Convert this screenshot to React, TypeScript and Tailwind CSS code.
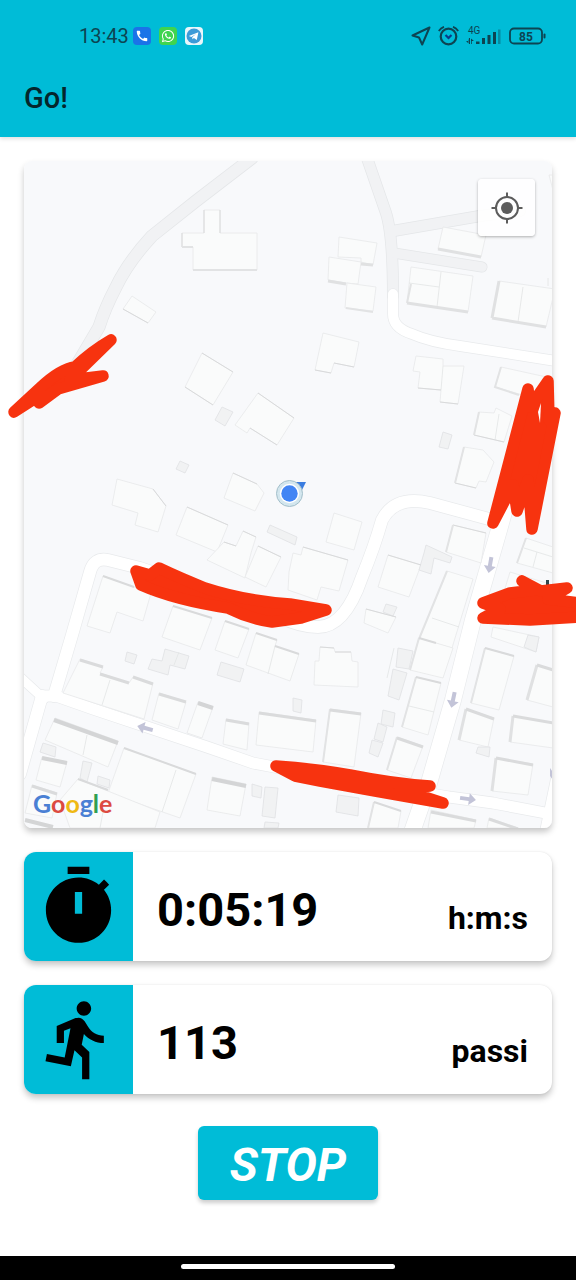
import type { ReactNode } from "react";
import { FaWhatsapp } from "react-icons/fa";
import { MdCall, MdDirectionsRun } from "react-icons/md";

/* ---------- map data, in map units ---------- */

const BUILDINGS = [
  "182,233 204,233 204,210 220,210 220,233 257,233 257,270 193,270 193,247 182,247",
  "132,296 156,312 148,323 123,309",
  "202,353 233,372 213,405 185,387",
  "258,393 294,418 277,445 250,428 247,433 235,425",
  "339,237 377,243 373,265 361,262 361,258 338,257",
  "329,257 361,262 358,284 346,283 328,280",
  "347,283 376,287 373,311 345,308",
  "443,227 486,235 481,257 438,249",
  "411,267 473,276 468,312 407,303",
  "499,281 555,289 546,327 492,318",
  "323,333 359,342 354,367 334,363 331,373 315,370",
  "416,356 443,359 443,366 464,366 458,404 440,402 441,390 418,388 420,372 413,371",
  "501,367 551,378 546,400 519,394 495,387",
  "117,479 153,489 166,506 158,532 135,525 138,513 112,505",
  "233,473 257,484 264,493 255,511 224,498",
  "187,507 228,525 217,552 176,535",
  "243,531 256,537 251,553 245,578 207,560 224,542 236,546",
  "258,546 281,557 266,587 245,577",
  "334,513 362,522 354,550 326,542",
  "303,547 348,560 339,591 321,587 317,600 288,590 289,572 293,553 301,555",
  "388,555 421,565 409,597 378,587",
  "453,525 486,533 481,563 446,552",
  "447,571 473,579 452,648 419,639",
  "419,638 453,648 443,678 410,670",
  "366,609 396,617 388,633 364,623",
  "464,447 483,450 494,462 486,482 479,481 476,488 455,483",
  "479,412 494,413 496,408 506,413 512,416 504,442 474,435",
  "526,538 553,547 553,573 517,563",
  "510,572 553,585 553,610 503,595",
  "103,576 151,593 143,621 117,612 110,633 87,626",
  "173,606 212,618 200,650 162,637",
  "225,621 249,629 238,658 215,650",
  "256,633 277,640 275,646 299,654 290,681 246,665",
  "80,659 103,667 100,673 129,683 133,677 153,683 144,719 63,693",
  "159,693 186,702 178,729 152,720",
  "198,702 213,707 202,738 187,733",
  "226,719 249,723 247,750 223,744",
  "259,712 316,720 313,752 256,745",
  "55,718 118,741 108,767 45,740",
  "124,748 196,774 180,818 108,793",
  "78,779 160,812 155,828 70,828 60,800",
  "42,757 67,762 60,787 36,780",
  "32,785 57,793 52,818 25,813",
  "212,777 246,784 240,816 207,810",
  "320,647 334,648 335,652 351,652 352,661 358,662 358,687 314,685 315,661 319,661",
  "330,709 361,713 354,767 323,762",
  "416,677 441,683 428,735 402,727",
  "397,737 423,746 411,778 387,770",
  "485,648 514,656 499,710 471,703",
  "493,627 539,637 536,652 491,637",
  "537,665 553,670 553,707 527,700",
  "466,709 494,718 488,747 459,740",
  "513,716 553,723 553,748 510,742",
  "496,758 533,764 528,795 492,791",
  "374,802 401,811 398,828 368,828",
  "431,810 476,820 474,828 428,828",
  "489,818 518,828 487,828",
  "549,175 553,175 553,190",
];

const SHEDS = [
  "222,407 233,412 225,426 215,420",
  "180,461 189,465 185,473 176,469",
  "270,525 297,537 295,545 267,532",
  "426,545 452,557 450,563 434,558 431,574 419,570 424,553",
  "386,604 397,607 393,616 383,612",
  "443,432 452,435 448,449 439,447",
  "127,652 137,655 134,664 125,661",
  "165,649 189,656 185,669 170,665 168,675 148,669 152,659 162,661",
  "221,662 244,669 240,682 217,675",
  "43,743 56,747 55,757 40,752",
  "83,761 92,763 87,782 80,778",
  "98,776 110,780 109,788 97,784",
  "252,784 262,787 261,798 252,796",
  "265,787 278,788 275,818 262,816",
  "265,822 279,823 278,828 264,828",
  "293,698 302,700 301,713 293,711",
  "398,648 413,651 409,669 396,667",
  "393,669 407,673 399,700 388,696",
  "383,710 395,713 393,727 381,724",
  "378,723 387,727 383,742 374,739",
  "372,740 383,743 378,757 369,753",
  "528,635 539,637 536,652 524,647",
  "478,747 490,747 489,757 476,753",
  "338,795 359,798 358,816 336,812",
];

const DIVIDERS =
  "M441 272L437 307M409 283L439 287M523 287L518 322M443 366L441 390M499 414L495 440M524 548L553 557M537 552L533 567M432 618L459 627M409 706L434 712M110 680L102 705M87 735L83 755M176 770L162 812M275 646L268 674M103 812L100 828M174 665L179 652M548 278L548 286M394 648L387 678";

const WALLS: { width: number; color: string; d: string }[] = [
  {
    width: 1,
    color: "#d9dadb",
    d: "M123 309L148 323M202 353L233 372M185 387L213 405M258 393L294 418M250 428L277 445M153 489L166 506M187 507L228 525M258 546L281 557M243 531L256 537M224 542L236 546M303 547L348 560M388 555L421 565M315 370L331 373M334 363L354 367M182 247V233M204 233V210M220 233V210M320 647L334 648M335 652L351 652M453 525L486 533M366 609L396 617M233 473L257 484M418 388L441 390M440 402L458 404M474 435L504 442M455 483L476 488",
  },
  {
    width: 2,
    color: "#e2e3e4",
    d: "M193 270H257M182 247H193M346 308L373 312M447 571L419 639M419 638L410 670M416 677L402 727M485 648L471 703M501 367L495 387L519 395M464 447L455 483M453 525L446 552M479 412L474 435M397 737L387 770M330 709L323 762M374 802L368 828M411 284L407 303M526 538L517 563",
  },
  {
    width: 2,
    color: "#d9dadb",
    d: "M103 576L134 587M173 606L212 618M225 621L249 629M256 633L277 640M275 646L299 654M124 748L196 774M78 779L108 790M416 677L441 683M419 638L436 643M485 648L514 656M374 802L401 811",
  },
  {
    width: 3,
    color: "#e0e1e2",
    d: "M438 249L481 257M407 303L468 312M492 318L546 327M499 281L492 318M328 281L346 284M361 264L373 265M466 709L459 740M513 716L510 742M496 758L492 791M537 665L527 700",
  },
  {
    width: 3,
    color: "#dadbdc",
    d: "M80 660L103 667M100 674L129 683M133 677L153 684M159 694L186 702M226 720L249 724M259 713L316 721M330 710L361 714M397 738L423 747M466 709L494 719M513 716L553 723M496 758L533 765M537 665L553 670M431 812L476 821M489 819L518 829M32 786L57 794",
  },
  {
    width: 4,
    color: "#d4d5d6",
    d: "M54 720L118 743M42 758L67 763M198 703L213 708M212 779L246 786M25 820L53 827",
  },
];

const GREY_ROADS = [
  { width: 13, d: "M252 158L196 201L152 236Q128 262 116 287Q105 308 99 327L76 366" },
  { width: 12, d: "M367 158L386 213Q393 235 393 296" },
  { width: 12, d: "M393 231L480 216L520 211" },
  { width: 11, d: "M394 253L482 267" },
];

const WHITE_ROADS = [
  { width: 10, d: "M393 294V314Q393 328 412 334Q430 342 460 346L556 361" },
  {
    width: 12,
    d: "M500 522L430 503Q395 495 382 520Q374 548 362 577Q345 627 318 627Q300 627 280 617L140 568L108 560Q94 557 90 572L72 635L54 696",
  },
  { width: 11, d: "M42 696H56L93 709L207 747L253 763L290 770L449 797L493 803L556 815" },
  { width: 9, d: "M44 699L20 677" },
  { width: 12, d: "M42 696L20 774" },
  { width: 16, d: "M535 400L499 530L473 620L453 700L429 783L412 832" },
  { width: 14, d: "M562 760L547 832" },
];

const SCRIBBLES = [
  "M111 340Q92 351 75 367Q60 369 40 388L14 412L39 396L39 403L58 389L103 376L70 380Z",
  "M136 571L150 575L159 568Q180 578 205 588Q245 601 290 604L326 610L301 618L272 622Q250 619 228 608Q175 600 141 585Z",
  "M493 523L528 389L530 407L548 381L549 420L555 413L532 529L528 480L517 511L513 485Z",
  "M483 603L510 593L535 590L522 581L541 591L567 588L548 599L580 603V617L530 620L483 618L500 609Z",
  "M276 766Q310 768 350 775Q395 784 430 786L400 789L443 803L375 791L320 781L295 776Z",
];

const ARROW = "M-2 -8H2V1H6L0 8L-6 1H-2Z";

function MapDrawing() {
  return (
    <svg viewBox="24 161 528 667" className="block h-auto w-full rounded-lg" role="img" aria-label="Mappa">
      <rect x="24" y="161" width="528" height="667" fill="#f8f9fb" />
      <g fill="none" strokeLinecap="round" strokeLinejoin="round">
        {GREY_ROADS.map((r) => (
          <path key={r.d} d={r.d} stroke="#e4e6e8" strokeWidth={r.width} />
        ))}
        {GREY_ROADS.map((r) => (
          <path key={r.d} d={r.d} stroke="#f1f2f4" strokeWidth={r.width - 1.4} />
        ))}
        {WHITE_ROADS.map((r) => (
          <path key={r.d} d={r.d} stroke="#e8eaec" strokeWidth={r.width + 1.4} />
        ))}
        {WHITE_ROADS.map((r) => (
          <path key={r.d} d={r.d} stroke="#ffffff" strokeWidth={r.width} />
        ))}
      </g>
      <g fill="#fafbfb" stroke="#e7e9ea" strokeWidth="0.8">
        {BUILDINGS.map((p) => (
          <polygon key={p} points={p} />
        ))}
      </g>
      <g fill="#f1f2f3" stroke="#dfe1e3" strokeWidth="0.8">
        {SHEDS.map((p) => (
          <polygon key={p} points={p} />
        ))}
      </g>
      <path d={DIVIDERS} fill="none" stroke="#e2e4e5" strokeWidth="0.8" />
      {WALLS.map((w) => (
        <path key={w.d} d={w.d} fill="none" stroke={w.color} strokeWidth={w.width} />
      ))}
      <g fill="#c3c4d8">
        <path d={ARROW} transform="translate(490 565) rotate(10)" />
        <path d={ARROW} transform="translate(453 700) rotate(12)" />
        <path d={ARROW} transform="translate(145 728) rotate(105)" />
        <path d={ARROW} transform="translate(468 799) rotate(-82)" />
        <path d="M550 768L553 772V780L550 776Z" />
      </g>
      <polygon points="293,482 306,482 300,494" fill="#3b7de0" />
      <circle cx="289.500" cy="493.500" r="13" fill="#d3e6ee" stroke="#a3bfca" strokeWidth="1" />
      <circle cx="289.500" cy="493.500" r="9.700" fill="#ffffff" />
      <circle cx="289.500" cy="493.500" r="8.200" fill="#4285f4" />
    </svg>
  );
}

function Scribbles() {
  return (
    <svg
      viewBox="24 161 528 667"
      className="pointer-events-none absolute inset-0 h-full w-full overflow-visible"
      aria-hidden="true"
    >
      <path d="M546 580h3v6h-3z" fill="#30474e" />
      <g fill="#f7330f" stroke="#f7330f" strokeWidth="11.500" strokeLinecap="round" strokeLinejoin="round">
        {SCRIBBLES.map((d) => (
          <path key={d} d={d} />
        ))}
      </g>
      <path d="M538 412L541 403L540 423Z" fill="#ffffff" />
    </svg>
  );
}

function LocateIcon() {
  return (
    <svg viewBox="0 0 32 32" className="size-8" fill="none" stroke="currentColor" aria-hidden="true">
      <circle cx="16" cy="16" r="11" strokeWidth="2" />
      <path d="M16 0.500V5M16 27V31.500M0.500 16H5M27 16H31.500" strokeWidth="2" />
      <circle cx="16" cy="16" r="6" fill="currentColor" stroke="none" />
    </svg>
  );
}

function TimerIcon() {
  return (
    <svg viewBox="0 0 24 24" className="size-[87px]" fill="currentColor" fillRule="evenodd" aria-hidden="true">
      <path d="M15 1H9v2h6V1zm-4 13h2V8h-2v6zm8.030-6.610l1.420-1.420c-.43-.51-.9-.99-1.410-1.410l-1.420 1.420C16.070 4.740 14.120 4 12 4c-4.970 0-9 4.030-9 9s4.020 9 9 9 9-4.030 9-9c0-2.120-.74-4.070-1.970-5.610z" />
    </svg>
  );
}

function StatusBar() {
  return (
    <div className="flex h-[72px] items-center justify-between pr-[30px] pl-[79px] text-[#0d4452]">
      <div className="flex items-center gap-2">
        <span className="-mr-1 text-[20px] leading-6">13:43</span>
        <span className="flex size-[18px] items-center justify-center rounded bg-[#1a73e8] text-white">
          <MdCall className="size-[14px]" />
        </span>
        <span className="flex size-[18px] items-center justify-center rounded bg-[#3fd44f] text-white">
          <FaWhatsapp className="size-[14px]" />
        </span>
        <span className="flex size-[18px] items-center justify-center rounded bg-[#e9f6fb]">
          <svg viewBox="0 0 16 16" className="size-4" aria-hidden="true">
            <circle cx="8" cy="8" r="7.500" fill="#3d9bd8" />
            <path d="M2.800 8.100L12.400 4.200L10.800 12L7.900 9.900L6.500 11.300L6.200 9.200L10 6.100L5.300 8.900Z" fill="#ffffff" />
          </svg>
        </span>
      </div>
      <div className="flex items-center gap-[7px]">
        <svg viewBox="0 0 20 20" className="size-5" fill="none" stroke="currentColor" strokeWidth="2" strokeLinejoin="round" aria-hidden="true">
          <path d="M18.500 1.500L1.500 9.500L8 11.500L11.200 18.500Z" />
        </svg>
        <svg viewBox="0 0 21 20" className="h-5 w-[21px]" fill="none" stroke="currentColor" strokeWidth="2.200" aria-hidden="true">
          <circle cx="10.500" cy="10.500" r="7.800" />
          <path d="M7.500 9L10.500 12L13.500 9" stroke="#0b3a86" />
          <path d="M0.800 5Q2.800 1.800 6 0.800M20.200 5Q18.200 1.800 15 0.800" strokeWidth="1.800" />
        </svg>
        <svg viewBox="0 0 36 20" className="h-5 w-9" fill="currentColor" aria-label="4G" role="img">
          <text x="2" y="8" fontSize="10" fontFamily="Roboto, sans-serif">
            4G
          </text>
          <path d="M2.500 12V17.500L0 15H2ZM5 18V12.500L8 15H5.800V18ZM3 12h1v6h-1z" />
          <path d="M10 15.500h3.500v2.500h-3.500zM16 12h3v6h-3zM21.500 9h3v9h-3zM27 6h3v12h-3z" />
          <path d="M32 3.500h2.500v14.500h-2.500z" opacity="0.4" />
        </svg>
        <svg viewBox="0 0 37 18" className="h-[18px] w-[37px]" aria-label="85" role="img">
          <rect x="1" y="1.500" width="32" height="15" rx="4" fill="none" stroke="currentColor" strokeWidth="1.800" />
          <rect x="34.500" y="6.500" width="2" height="5" rx="1" fill="currentColor" />
          <text x="17" y="13.500" textAnchor="middle" fontSize="12" fontWeight="700" fontFamily="Roboto, sans-serif" fill="currentColor">
            85
          </text>
        </svg>
      </div>
    </div>
  );
}

function StatCard({ icon, value, unit }: { icon: ReactNode; value: string; unit: string }) {
  return (
    <section className="flex h-[109px] items-stretch overflow-hidden rounded-xl bg-white shadow-[0_4px_6px_rgba(0,0,0,0.22),0_0_2px_rgba(0,0,0,0.1)]">
      <div className="flex w-[109px] items-center justify-center bg-[#00bcd7] text-black">{icon}</div>
      <div className="flex flex-1 items-center justify-between px-6 font-bold text-black">
        <span className="pt-1.5 text-[47px] leading-[56px]">{value}</span>
        <span className="pt-[22px] text-[32px] leading-9">{unit}</span>
      </div>
    </section>
  );
}

export default function App() {
  return (
    <div className="flex min-h-screen flex-col overflow-x-hidden bg-white font-[Roboto,sans-serif]">
      <header className="flex h-[137px] flex-col bg-[#00bcd7] shadow-[0_2px_4px_rgba(0,0,0,0.12)]">
        <StatusBar />
        <h1 className="px-6 pt-2 text-[29px] leading-9 font-medium text-[#04262c]">Go!</h1>
      </header>

      <main className="flex flex-1 flex-col gap-6 px-6 pt-6">
        <div className="relative rounded-lg shadow-[0_4px_6px_rgba(0,0,0,0.22)]">
          <MapDrawing />
          <button
            type="button"
            aria-label="La mia posizione"
            className="absolute top-[18px] right-[17px] flex size-[57px] items-center justify-center rounded-sm bg-white/90 text-[#5c5c5c] shadow-[0_1px_3px_rgba(0,0,0,0.3)]"
          >
            <LocateIcon />
          </button>
          <div className="absolute bottom-[9px] left-[9px] font-[Lato,sans-serif] text-[25px] leading-8 font-bold">
            <span className="text-[#4a80d4]">G</span>
            <span className="text-[#dc4a41]">o</span>
            <span className="text-[#efb913]">o</span>
            <span className="text-[#4a80d4]">g</span>
            <span className="text-[#2f9f52]">l</span>
            <span className="text-[#dc4a41]">e</span>
          </div>
          <Scribbles />
        </div>

        <StatCard icon={<TimerIcon />} value="0:05:19" unit="h:m:s" />
        <StatCard icon={<MdDirectionsRun className="size-[87px]" />} value="113" unit="passi" />

        <button
          type="button"
          className="mt-2 h-[74px] self-center rounded-md bg-[#00bcd7] px-8 pt-1 text-[47px] leading-[56px] font-bold text-white italic shadow-[0_3px_4px_rgba(0,0,0,0.2)]"
        >
          STOP
        </button>
      </main>

      <footer className="flex h-6 items-center justify-center bg-black pb-1">
        <div className="h-[5px] w-[37%] rounded-full bg-white" />
      </footer>
    </div>
  );
}
